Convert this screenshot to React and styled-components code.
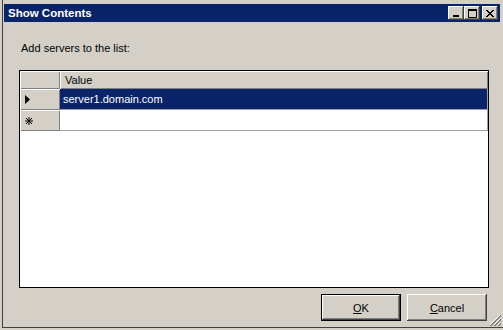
import React from "react";
import styled, { createGlobalStyle } from "styled-components";

const Global = createGlobalStyle`
  html, body { margin: 0; padding: 0; background: #d4d0c8; }
  body { font-family: "Liberation Sans", Arial, sans-serif; font-size: 11px; color: #000; }
`;

const Window = styled.div`
  position: relative;
  box-sizing: border-box;
  width: 503px;
  height: 328px;
  padding: 4px 3px 0 4px;
  display: flex;
  flex-direction: column;
  background: #d4d0c8;
  box-shadow: inset 2px 0 #d4d0c8, inset 3px 0 #404040, inset 0 -1px #404040;
`;

const TitleBar = styled.div`
  height: 18px;
  background: #0a246a;
  display: flex;
  align-items: center;
  justify-content: space-between;
  padding: 0 2px 0 4px;
`;

const Title = styled.span`
  color: #fff;
  font-weight: bold;
  font-size: 11.5px;
  line-height: 18px;
`;

const Caps = styled.div`
  display: flex;
  align-items: center;
  gap: 0;
`;

const bevel = `
  box-shadow: inset -1px -1px #404040, inset 1px 1px #fff, inset -2px -2px #808080, inset 2px 2px #d4d0c8;
`;

const CapBtn = styled.div`
  box-sizing: border-box;
  width: 16px;
  height: 14px;
  margin-left: ${(p) => (p.$gap ? "2px" : "0")};
  background: #d4d0c8;
  ${bevel}
  display: flex;
  align-items: center;
  justify-content: center;
`;

const Body = styled.div`
  flex: 1;
  display: flex;
  flex-direction: column;
  padding: 0 11px 0 15px;
`;

const Label = styled.div`
  margin: 20px 0 15px 2px;
  line-height: 13px;
`;

const Grid = styled.div`
  box-sizing: border-box;
  height: 218px;
  border: 1px solid #000;
  background: #fff;
  display: flex;
  flex-direction: column;
`;

const Row = styled.div`
  display: flex;
  height: ${(p) => p.$h}px;
`;

const HeadCell = styled.div`
  box-sizing: border-box;
  width: ${(p) => (p.$w ? p.$w + "px" : "auto")};
  flex: ${(p) => (p.$w ? "none" : "1")};
  background: #d4d0c8;
  box-shadow: inset 1px 1px #fff, inset -1px -1px #808080;
  display: flex;
  align-items: center;
  padding-left: ${(p) => p.$pl || 0}px;
  line-height: 13px;
`;

const Cell = styled.div`
  box-sizing: border-box;
  flex: 1;
  display: flex;
  align-items: center;
  padding-left: 3px;
  background: ${(p) => (p.$selected ? "#0a246a" : "#fff")};
  color: ${(p) => (p.$selected ? "#fff" : "#000")};
  border-right: 1px solid #a0a0a0;
  border-bottom: 1px solid #a0a0a0;
`;

const Footer = styled.div`
  display: flex;
  justify-content: flex-end;
  gap: 6px;
  margin-top: 6px;
  padding-right: 2px;
`;

const Button = styled.div`
  box-sizing: border-box;
  width: 80px;
  height: 27px;
  background: #d4d0c8;
  display: flex;
  align-items: center;
  justify-content: center;
  border: ${(p) => (p.$default ? "1px solid #000" : "0")};
  ${bevel}
  u { text-decoration: underline; }
`;

const Grip = styled.svg`
  position: absolute;
  right: 2px;
  bottom: 2px;
`;

function Triangle() {
  return (
    <svg width="5" height="9" viewBox="0 0 5 9">
      <path d="M0 0 L5 4.5 L0 9 Z" fill="#000" />
    </svg>
  );
}

function Star() {
  return (
    <svg width="8" height="8" viewBox="0 0 8 8">
      <path d="M4 0 V8 M0 4 H8 M1 1 L7 7 M7 1 L1 7" stroke="#000" strokeWidth="1" fill="none" />
    </svg>
  );
}

export default function App() {
  return (
    <>
      <Global />
      <Window>
        <TitleBar>
          <Title>Show Contents</Title>
          <Caps>
            <CapBtn>
              <svg width="8" height="8" viewBox="0 0 8 8">
                <rect x="1" y="6" width="6" height="2" fill="#000" />
              </svg>
            </CapBtn>
            <CapBtn>
              <svg width="9" height="9" viewBox="0 0 9 9">
                <path d="M0.5 1.5 H8.5 V8.5 H0.5 Z" fill="none" stroke="#000" />
                <rect x="0" y="0" width="9" height="2" fill="#000" />
              </svg>
            </CapBtn>
            <CapBtn $gap>
              <svg width="8" height="7" viewBox="0 0 8 7">
                <path d="M0 0 L7 7 M1 0 L8 7 M7 0 L0 7 M8 0 L1 7" stroke="#000" strokeWidth="1" />
              </svg>
            </CapBtn>
          </Caps>
        </TitleBar>
        <Body>
          <Label>Add servers to the list:</Label>
          <Grid>
            <Row $h={18}>
              <HeadCell $w={40} />
              <HeadCell $pl={5}>Value</HeadCell>
            </Row>
            <Row $h={21}>
              <HeadCell $w={40} $pl={5}>
                <Triangle />
              </HeadCell>
              <Cell $selected>server1.domain.com</Cell>
            </Row>
            <Row $h={21}>
              <HeadCell $w={40} $pl={5}>
                <Star />
              </HeadCell>
              <Cell />
            </Row>
          </Grid>
          <Footer>
            <Button $default>
              <span><u>O</u>K</span>
            </Button>
            <Button>
              <span><u>C</u>ancel</span>
            </Button>
          </Footer>
        </Body>
        <Grip width="12" height="12" viewBox="0 0 12 12">
          <path d="M11 1 L1 11 M11 5 L5 11 M11 9 L9 11" stroke="#fff" />
          <path d="M12 1 L1 12 M12 2 L2 12 M12 5 L5 12 M12 6 L6 12 M12 9 L9 12 M12 10 L10 12" stroke="#808080" />
        </Grip>
      </Window>
    </>
  );
}
